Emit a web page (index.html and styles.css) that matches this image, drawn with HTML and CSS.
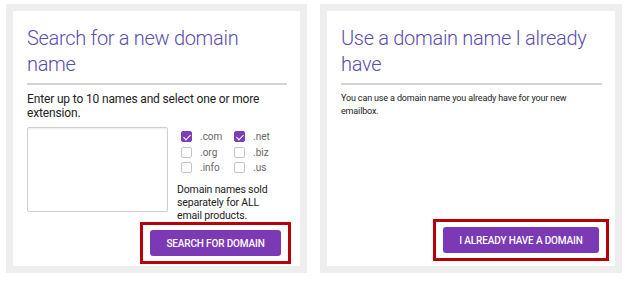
FILE: index.html
```html
<!DOCTYPE html>
<html lang="en">
<head>
    <meta charset="UTF-8">
    <meta content="width=device-width, initial-scale=1.0" name="viewport">
    <title>Choose a domain</title>
    <link rel="stylesheet" href="styles.css">
</head>
<body>
<div class="panels">
    <section class="card card-search">
        <div class="card-inner">
            <h2 class="card-title">Search for a new domain name</h2>
            <p class="card-text">Enter up to 10 names and select one or more extension.</p>

            <div class="search-row">
                <textarea class="names"></textarea>
                <div class="options">
                    <div class="ext-grid">
                        <label class="ext"><span class="box checked"></span>.com</label>
                        <label class="ext"><span class="box checked"></span>.net</label>
                        <label class="ext"><span class="box"></span>.org</label>
                        <label class="ext"><span class="box"></span>.biz</label>
                        <label class="ext"><span class="box"></span>.info</label>
                        <label class="ext"><span class="box"></span>.us</label>
                    </div>
                    <p class="note">Domain names sold separately for ALL email products.</p>
                </div>
            </div>

            <div class="action">
                <div class="highlight">
                    <button class="btn">Search for domain</button>
                </div>
            </div>
        </div>
    </section>

    <section class="card card-own">
        <div class="card-inner">
            <h2 class="card-title">Use a domain name I already have</h2>
            <p class="card-small">You can use a domain name you already have for your new emailbox.</p>

            <div class="action">
                <div class="highlight">
                    <button class="btn btn-wide">I already have a domain</button>
                </div>
            </div>
        </div>
    </section>
</div>
</body>
</html>
```

FILE: styles.css
```css
* {
    box-sizing: border-box;
    margin: 0;
    padding: 0;
}

body {
    font-family: Roboto, "Open Sans", sans-serif;
    background-color: white;
    color: #222;
}

.panels {
    display: flex;
    gap: 13px;
    padding: 4px 0 0 6px;
}

.card {
    border: 7px solid #eeeeee;
    height: 269px;
}

.card-search {
    width: 301px;
}

.card-own {
    width: 302px;
}

.card-inner {
    display: flex;
    flex-direction: column;
    height: 100%;
    background-color: white;
    padding: 14px 0 5px 14px;
}

.card-title {
    font-size: 20px;
    font-weight: 300;
    letter-spacing: -0.3px;
    line-height: 26px;
    color: #5a4dae;
    padding-bottom: 6px;
    margin-right: 13px;
    border-bottom: 2px solid #d4d4d4;
}

.card-text {
    font-size: 12px;
    letter-spacing: -0.15px;
    line-height: 14px;
    margin: 7px 13px 7px 0;
}

.card-small {
    font-size: 9px;
    letter-spacing: -0.15px;
    line-height: 13px;
    margin: 7px 13px 0 0;
}

.search-row {
    display: flex;
    gap: 9px;
}

.names {
    width: 141px;
    height: 85px;
    border: 1px solid #cfcfcf;
    border-radius: 2px;
    box-shadow: inset 0 1px 2px rgba(0, 0, 0, 0.08);
    resize: none;
}

.options {
    width: 110px;
}

.ext-grid {
    display: grid;
    grid-template-columns: 53px 53px;
    row-gap: 4.5px;
    padding: 4px 0 0 4px;
}

.ext {
    display: flex;
    align-items: center;
    gap: 8px;
    font-size: 10px;
    color: #666;
    height: 11px;
}

.box {
    width: 11px;
    height: 11px;
    border: 1px solid #c4c4c4;
    border-radius: 2px;
    position: relative;
}

.box.checked {
    background-color: #7d3cb8;
    border-color: #7d3cb8;
}

.box.checked::after {
    content: "";
    position: absolute;
    left: 3px;
    top: 1px;
    width: 3px;
    height: 6px;
    border: solid white;
    border-width: 0 1px 1px 0;
    transform: rotate(45deg);
}

.note {
    width: 92px;
    font-size: 10.5px;
    letter-spacing: -0.15px;
    line-height: 13px;
    margin-top: 10px;
}

.action {
    margin-top: auto;
    display: flex;
    justify-content: flex-end;
    padding-right: 9px;
}

.card-own .action {
    padding-right: 6px;
}

.highlight {
    border: 3px solid #b8000b;
    padding: 5px 7px;
}

.btn {
    display: block;
    width: 131px;
    height: 26px;
    background-color: #7b39b5;
    color: white;
    border: none;
    border-radius: 3px;
    font-family: inherit;
    font-size: 10px;
    font-weight: 500;
    letter-spacing: -0.15px;
    text-transform: uppercase;
}

.btn-wide {
    width: 156px;
}
```
